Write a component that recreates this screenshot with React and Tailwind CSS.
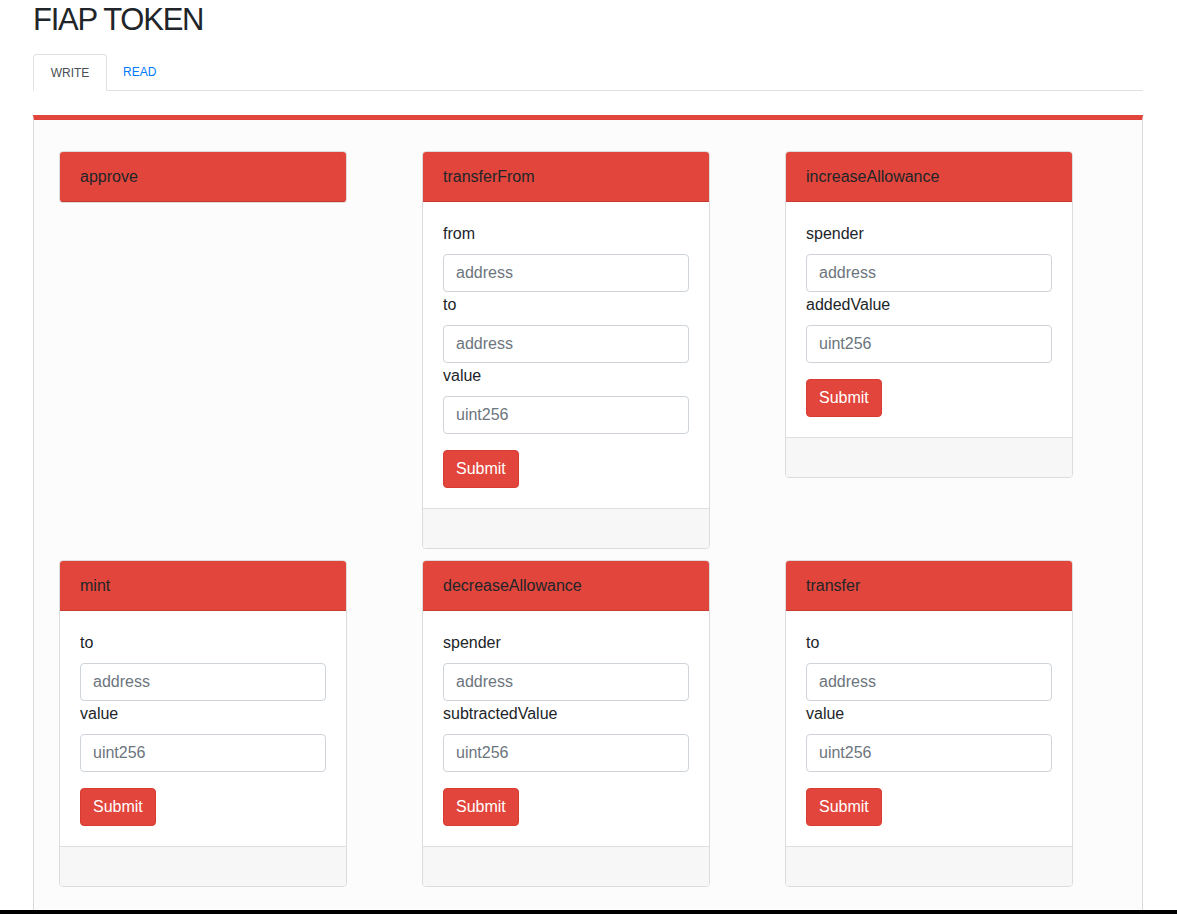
const cards = [
  { name: "approve", fields: null },
  {
    name: "transferFrom",
    fields: [
      { label: "from", type: "address" },
      { label: "to", type: "address" },
      { label: "value", type: "uint256" },
    ],
  },
  {
    name: "increaseAllowance",
    fields: [
      { label: "spender", type: "address" },
      { label: "addedValue", type: "uint256" },
    ],
  },
  {
    name: "mint",
    fields: [
      { label: "to", type: "address" },
      { label: "value", type: "uint256" },
    ],
  },
  {
    name: "decreaseAllowance",
    fields: [
      { label: "spender", type: "address" },
      { label: "subtractedValue", type: "uint256" },
    ],
  },
  {
    name: "transfer",
    fields: [
      { label: "to", type: "address" },
      { label: "value", type: "uint256" },
    ],
  },
];

function MethodCard({ card }) {
  return (
    <div className="overflow-hidden rounded-[4px] border border-[#dcdcdc] bg-white">
      <div className="flex h-[50px] items-center border-b border-[#c93a31] bg-[#e2453b] px-[20px] text-[16px] text-[#212529]">
        {card.name}
      </div>
      {card.fields && (
        <>
          <div className="px-[20px] pt-[20px] pb-[20px]">
            {card.fields.map((f, i) => (
              <div key={f.label}>
                <label
                  className={`block text-[16px] leading-[24px] text-[#212529] ${
                    i === 0 ? "mb-[8px]" : "mb-[8px] pt-[1px]"
                  }`}
                >
                  {f.label}
                </label>
                <input
                  type="text"
                  placeholder={f.type}
                  className="block h-[38px] w-full rounded-[4px] border border-[#ced4da] bg-white px-[12px] text-[16px] text-[#495057] placeholder:text-[#6c757d] outline-none"
                />
              </div>
            ))}
            <button
              type="button"
              className="mt-[16px] h-[38px] rounded-[4px] border border-[#d73b31] bg-[#e2453b] px-[12px] text-[16px] text-white"
            >
              Submit
            </button>
          </div>
          <div className="h-[40px] border-t border-[#dfdfdf] bg-[#f7f7f7]" />
        </>
      )}
    </div>
  );
}

export default function App() {
  return (
    <div className="flex h-[914px] flex-col overflow-hidden bg-white font-['Liberation_Sans',Arial,sans-serif] text-[#212529]">
      <div className="min-h-0 flex-1 overflow-hidden pl-[33px] pr-[34px]">
        <h1 className="pt-[1px] text-[31px] leading-[38px] font-normal tracking-[-0.04em] text-[#212529]">
          FIAP TOKEN
        </h1>

        <nav className="mt-[15px] flex h-[37px] border-b border-[#dee2e6] text-[12px]">
          <div className="-mb-px flex h-[37px] w-[74px] items-center justify-center rounded-t-[4px] border border-[#dee2e6] border-b-white bg-white text-[#495057]">
            WRITE
          </div>
          <div className="flex h-[36px] items-center px-[16px] text-[#007bff]">
            READ
          </div>
        </nav>

        <div className="mt-[24px] h-[900px] border-x border-t-[5px] border-[#dadada] border-t-[#e2453b] bg-[#fcfcfc] pt-[31px] pl-[25px]">
          <div className="grid grid-cols-[288px_288px_288px] items-start gap-x-[75px] gap-y-[11px]">
            {cards.map((c) => (
              <MethodCard key={c.name} card={c} />
            ))}
          </div>
        </div>
      </div>
      <div className="h-[4px] bg-black" />
    </div>
  );
}
